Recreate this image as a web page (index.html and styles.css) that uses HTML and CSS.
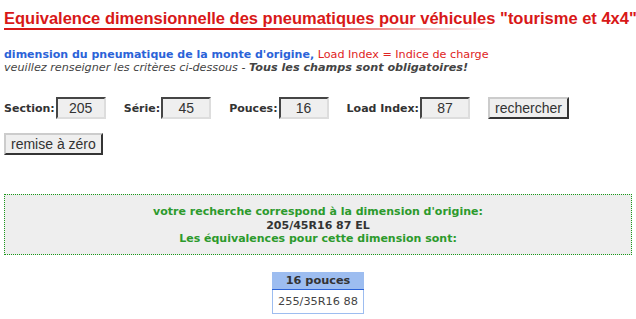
FILE: index.html
```html
<!DOCTYPE html>
<html lang="fr">
<head>
    <meta charset="UTF-8">
    <title>Equivalence dimensionnelle des pneumatiques</title>
    <link rel="stylesheet" href="styles.css">
</head>
<body>
    <h1 class="titre">Equivalence dimensionnelle des pneumatiques pour véhicules "tourisme et 4x4"</h1>

    <p class="intro">
        <span class="bleu">dimension du pneumatique de la monte d'origine,</span>
        <span class="rouge">Load Index = Indice de charge</span><br>
        <em>veuillez renseigner les critères ci-dessous</em> - <strong><em>Tous les champs sont obligatoires!</em></strong>
    </p>

    <form class="recherche">
        <div class="ligne">
            <label>Section:<input type="text" value="205"></label>
            <label>Série:<input type="text" value="45"></label>
            <label>Pouces:<input type="text" value="16"></label>
            <label>Load Index:<input type="text" value="87"></label>
            <button type="button">rechercher</button>
        </div>
        <div class="ligne">
            <button type="reset">remise à zéro</button>
        </div>
    </form>

    <div class="resultat">
        votre recherche correspond à la dimension d'origine:<br>
        <span class="dim">205/45R16 87 EL</span><br>
        Les équivalences pour cette dimension sont:
    </div>

    <table class="equiv">
        <tr><th>16 pouces</th></tr>
        <tr><td>255/35R16 88</td></tr>
    </table>
</body>
</html>
```

FILE: styles.css
```css
body {
    margin: 0;
    padding: 0 4px;
    font-family: "DejaVu Sans", Verdana, sans-serif;
    font-size: 11px;
    color: #333;
    background-color: #fff;
}
.titre {
    margin: 9px 0 0 0;
    padding: 0;
    white-space: nowrap;
    font-family: "Liberation Sans", Arial, sans-serif;
    font-size: 16.5px;
    line-height: 19px;
    font-weight: bold;
    color: #d81818;
    border-bottom: 2px solid;
    border-image: linear-gradient(to right, #d81818 40%, #fff 78%) 1;
}
.intro {
    margin: 18px 0 0 0;
    font-size: 11.2px;
    line-height: 13px;
}
.bleu {
    color: #2b63d8;
    font-weight: bold;
    font-size: 11px;
}
.rouge {
    color: #e02424;
}
.intro em {
    color: #444;
}
.recherche {
    margin-top: 23px;
}
.ligne {
    display: flex;
    align-items: center;
    margin-bottom: 14px;
}
.ligne label {
    display: flex;
    align-items: center;
    margin-right: 18px;
    font-family: "DejaVu Sans", Verdana, sans-serif;
    font-weight: bold;
    font-size: 11px;
    color: #333;
}
.ligne input {
    width: 46px;
    height: 18px;
    margin-left: 1px;
    padding: 0;
    border: 2px inset #999;
    border-right-color: #ddd;
    border-bottom-color: #ddd;
    background-color: #efefef;
    font-family: "Liberation Sans", Arial, sans-serif;
    font-size: 14px;
    color: #333;
    text-align: center;
}
.ligne button {
    height: 22px;
    padding: 0 5px;
    border: 2px outset #ccc;
    border-right-color: #888;
    border-bottom-color: #888;
    background-color: #efefef;
    font-family: "Liberation Sans", Arial, sans-serif;
    font-size: 14px;
    color: #333;
}
.resultat {
    margin-top: 39px;
    padding: 10px 0 8px;
    border: 1px dotted #1a9a1a;
    background-color: #eee;
    text-align: center;
    font-family: "DejaVu Sans", Verdana, sans-serif;
    font-weight: bold;
    font-size: 11px;
    line-height: 13.5px;
    color: #2c9a2c;
}
.resultat .dim {
    color: #333;
}
.equiv {
    margin: 17px auto 0;
    border-collapse: collapse;
    border: 1px solid #9dbdf0;
    font-family: "DejaVu Sans", Verdana, sans-serif;
}
.equiv th {
    padding: 1px 5px;
    background-color: #9dbdf0;
    border-bottom: 1px solid #2b63d8;
    font-size: 11.3px;
    line-height: 14px;
    color: #333;
}
.equiv td {
    padding: 5px 5px;
    font-size: 11.3px;
    line-height: 13px;
    color: #444;
}
```
